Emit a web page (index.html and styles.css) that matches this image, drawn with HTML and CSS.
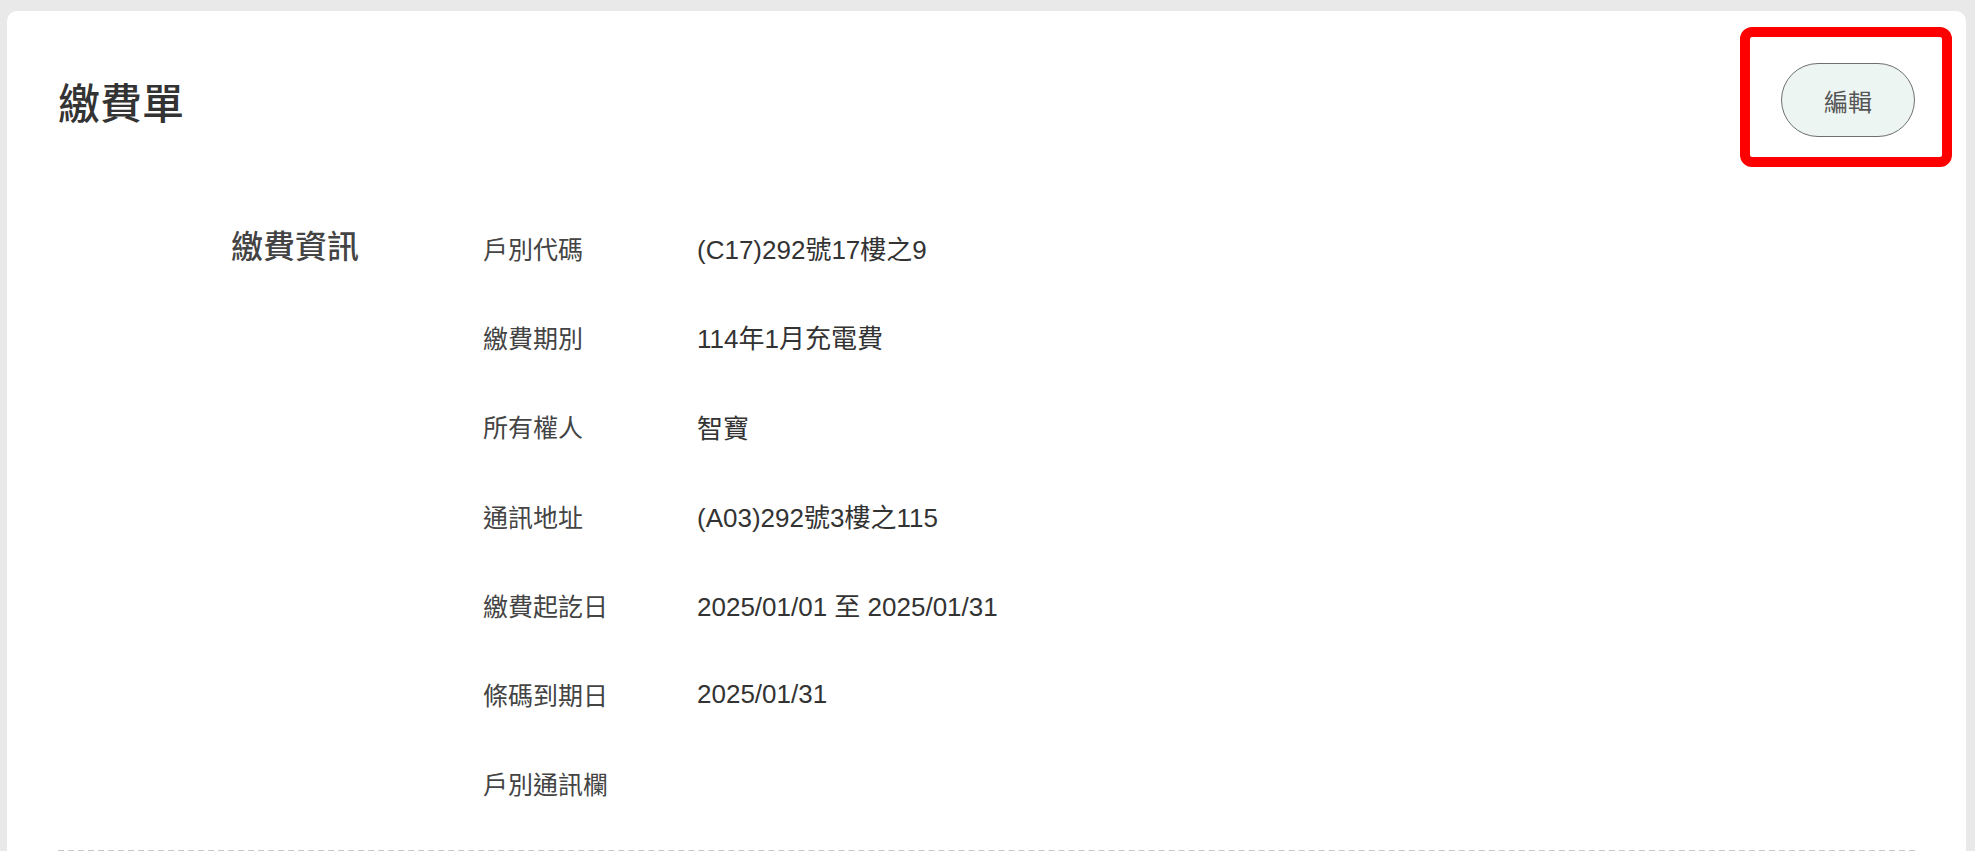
FILE: index.html
```html
<!DOCTYPE html>
<html lang="zh-Hant">
<head>
    <meta charset="UTF-8">
    <meta name="viewport" content="width=device-width, initial-scale=1.0">
    <title>繳費單</title>
    <link rel="stylesheet" href="styles.css">
</head>
<body>
    <main class="card">
        <div class="card-header">
            <h1>繳費單</h1>
            <div class="edit-wrap">
                <button type="button" class="edit-btn">編輯</button>
                <!-- 標示框 -->
                <span class="highlight"></span>
            </div>
        </div>

        <section class="info">
            <h2>繳費資訊</h2>
            <dl class="rows">
                <div class="row"><dt>戶別代碼</dt><dd>(C17)292號17樓之9</dd></div>
                <div class="row"><dt>繳費期別</dt><dd>114年1月充電費</dd></div>
                <div class="row"><dt>所有權人</dt><dd>智寶</dd></div>
                <div class="row"><dt>通訊地址</dt><dd>(A03)292號3樓之115</dd></div>
                <div class="row"><dt>繳費起訖日</dt><dd>2025/01/01 至 2025/01/31</dd></div>
                <div class="row"><dt>條碼到期日</dt><dd>2025/01/31</dd></div>
                <div class="row"><dt>戶別通訊欄</dt><dd></dd></div>
            </dl>
        </section>
    </main>
</body>
</html>
```

FILE: styles.css
```css
body {
    font-family: "Liberation Sans", "Noto Sans CJK TC", sans-serif;
    margin: 0;
    padding: 11px 9px 0 7px;
    background-color: #e9e9e9;
    color: #333;
}
.card {
    background-color: #fff;
    border-radius: 10px;
    padding: 52px 51px 0 51px;
    min-height: 900px;
}
.card-header {
    display: flex;
    justify-content: space-between;
    align-items: center;
}
.card-header h1 {
    margin: 0;
    font-size: 42px;
    font-weight: 500;
    color: #333;
}
.edit-wrap {
    position: relative;
}
.edit-btn {
    display: block;
    width: 134px;
    height: 74px;
    border: 1.5px solid #6f6f6f;
    border-radius: 37px;
    background-color: #edf5f3;
    color: #555;
    font-family: inherit;
    font-size: 24px;
    cursor: pointer;
}
.highlight {
    position: absolute;
    top: -36px;
    left: -41px;
    right: -37px;
    bottom: -30px;
    border: 10px solid #f00;
    border-radius: 12px;
    pointer-events: none;
}
.info {
    display: flex;
    margin-top: 66px;
    padding: 0 0 22px 173px;
    border-bottom: 2px dashed #c8c8c8;
}
.info h2 {
    width: 252px;
    flex-shrink: 0;
    margin: 0;
    padding-top: 24px;
    font-size: 32px;
    line-height: 40px;
    font-weight: 500;
    color: #444;
}
.rows {
    margin: 0;
}
.row {
    display: flex;
    align-items: center;
    height: 89.3px;
    font-size: 25px;
}
.row dt {
    width: 214px;
    color: #444;
}
.row dd {
    margin: 0;
    font-size: 26px;
    color: #333;
}
```
